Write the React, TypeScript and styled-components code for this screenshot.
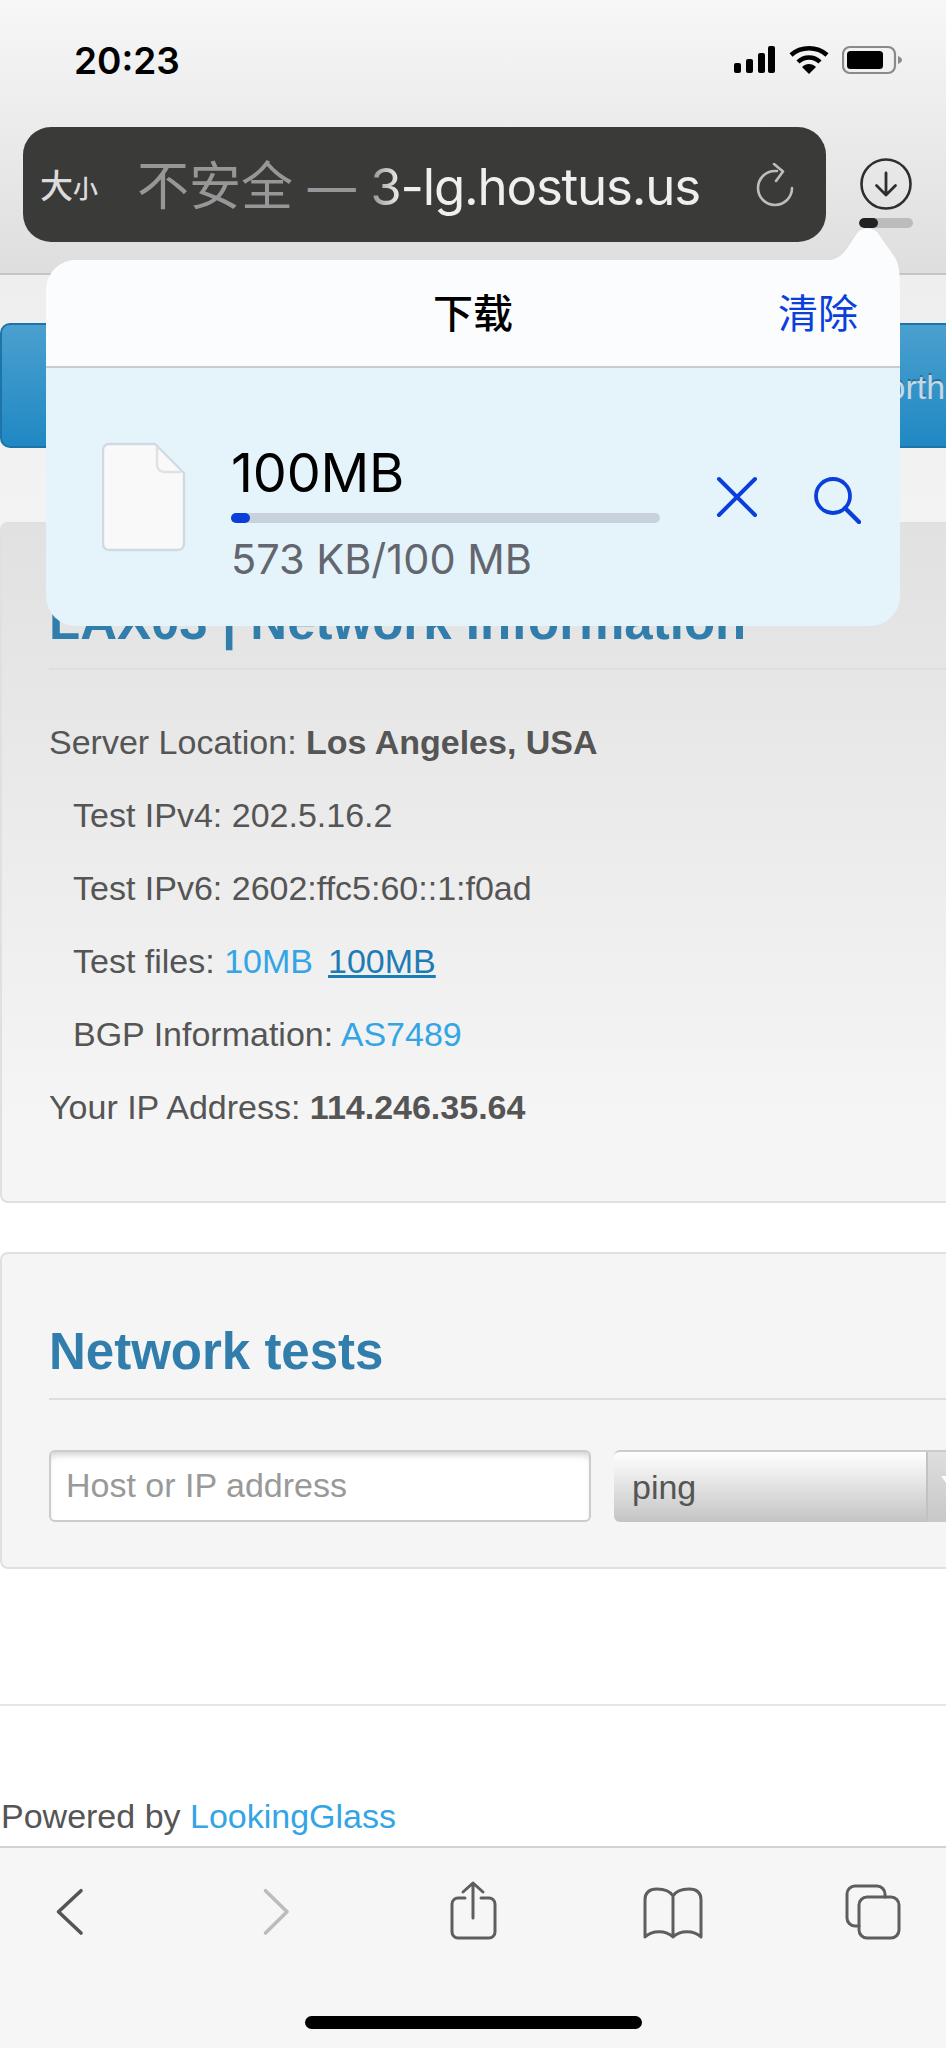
import React from "react";
import styled, { createGlobalStyle } from "styled-components";

const GlobalStyle = createGlobalStyle`
  html, body {
    margin: 0;
    padding: 0;
    background: #fff;
  }
  * {
    box-sizing: border-box;
  }
`;

const IOS_FONT = `Inter, "Noto Sans CJK SC", sans-serif`;
const WEB_FONT = `"Liberation Sans", Arial, sans-serif`;
const BLUE = "#0a3fdc";

const rows = [
  { id: "loc", indent: false, label: "Server Location: ", strong: "Los Angeles, USA" },
  { id: "v4", indent: true, label: "Test IPv4: 202.5.16.2" },
  { id: "v6", indent: true, label: "Test IPv6: 2602:ffc5:60::1:f0ad" },
  { id: "files", indent: true, label: "Test files: ", links: true },
  { id: "bgp", indent: true, label: "BGP Information: ", link: "AS7489" },
  { id: "ip", indent: false, label: "Your IP Address: ", strong: "114.246.35.64" },
];

export default function App() {
  return (
    <Screen>
      <GlobalStyle />
      <BrowserBar>
        <StatusRow>
          <Clock>20:23</Clock>
          <StatusIcons>
            <svg width="42" height="28" viewBox="0 0 42 28">
              <rect x="0" y="17" width="7" height="10" rx="2" fill="#000" />
              <rect x="12" y="13" width="7" height="14" rx="2" fill="#000" />
              <rect x="24" y="7" width="7" height="20" rx="2" fill="#000" />
              <rect x="34" y="0" width="7" height="27" rx="2" fill="#000" />
            </svg>
            <svg width="40" height="30" viewBox="0 0 40 30">
              <path d="M2 10 C12 1 28 1 38 10" fill="none" stroke="#000" strokeWidth="4.5" />
              <path d="M9 17 C15 11 25 11 31 17" fill="none" stroke="#000" strokeWidth="4.5" />
              <path d="M13 22 C17 18 23 18 27 22 L20 29 Z" fill="#000" />
            </svg>
            <svg width="60" height="30" viewBox="0 0 60 30">
              <rect x="1" y="2" width="52" height="26" rx="7" fill="none" stroke="#8a8a8a" strokeWidth="2.2" />
              <rect x="5" y="6" width="36" height="18" rx="3.5" fill="#000" />
              <path d="M56 11 C59 12 60 14 60 15 C60 16 59 18 56 19 Z" fill="#8a8a8a" />
            </svg>
          </StatusIcons>
        </StatusRow>
        <UrlRow>
          <UrlBar>
            <TextSize>
              大<small>小</small>
            </TextSize>
            <UrlText>
              <InsecureLabel>
                不安全 <Dash>—</Dash>{" "}
              </InsecureLabel>
              <FadeDigit>3</FadeDigit>-lg.hostus.us
            </UrlText>
            <ReloadIcon width="40" height="48" viewBox="0 0 40 48">
              <path
                d="M36 25 A17 17 0 1 1 19 8 L21 8"
                fill="none"
                stroke="#bdbdbd"
                strokeWidth="2.6"
                strokeLinecap="round"
              />
              <path
                d="M18 1 L27 8.5 L20 18"
                fill="none"
                stroke="#bdbdbd"
                strokeWidth="2.6"
                strokeLinecap="round"
                strokeLinejoin="round"
              />
            </ReloadIcon>
          </UrlBar>
          <DownloadColumn>
            <svg width="54" height="54" viewBox="0 0 54 54">
              <circle cx="27" cy="27" r="24.5" fill="none" stroke="#2e2e2e" strokeWidth="2.6" />
              <path
                d="M27 16 V38 M17.5 28.5 L27 38 L36.5 28.5"
                fill="none"
                stroke="#2e2e2e"
                strokeWidth="2.8"
                strokeLinecap="round"
                strokeLinejoin="round"
              />
            </svg>
            <DownloadTrack>
              <DownloadFill />
            </DownloadTrack>
          </DownloadColumn>
        </UrlRow>
      </BrowserBar>

      <Page>
        <NavBar>
          <NavText>North America</NavText>
        </NavBar>

        <Card $dim>
          <CardTitle>LAX03 | Network Information</CardTitle>
          <InfoList>
            {rows.map((row) => (
              <InfoRow key={row.id} $indent={row.indent}>
                <span>{row.label}</span>
                {row.strong && <strong>{row.strong}</strong>}
                {row.link && <WebLink>{row.link}</WebLink>}
                {row.links && (
                  <>
                    <WebLink>10MB</WebLink>
                    <ActiveLink>100MB</ActiveLink>
                  </>
                )}
              </InfoRow>
            ))}
          </InfoList>
        </Card>

        <SecondCard>
          <CardTitle>Network tests</CardTitle>
          <FormRow>
            <HostInput placeholder="Host or IP address" />
            <SelectBox>
              <SelectValue>ping</SelectValue>
              <SelectArrow>
                <ArrowTriangle />
              </SelectArrow>
            </SelectBox>
          </FormRow>
        </SecondCard>

        <FooterRule />
        <Footer>
          Powered by <WebLink>LookingGlass</WebLink>
        </Footer>
      </Page>

      <Toolbar>
        <ToolbarIcons>
          <svg width="80" height="70" viewBox="0 0 80 70">
            <path d="M51 14.7 L28.5 35.7 L51 57" fill="none" stroke="#555" strokeWidth="3.6" strokeLinecap="round" strokeLinejoin="round" />
          </svg>
          <svg width="80" height="70" viewBox="0 0 80 70">
            <path d="M35.5 14.7 L57 35.7 L35.5 57" fill="none" stroke="#bcbcbc" strokeWidth="3.6" strokeLinecap="round" strokeLinejoin="round" />
          </svg>
          <svg width="80" height="70" viewBox="0 0 80 70">
            <g fill="none" stroke="#5e5e5e" strokeWidth="3" strokeLinecap="round" strokeLinejoin="round">
              <path d="M35 22 H28 a6 6 0 0 0 -6 6 V56 a6 6 0 0 0 6 6 H59 a6 6 0 0 0 6 -6 V28 a6 6 0 0 0 -6 -6 H51" />
              <path d="M43 7 V42 M33 16 L43 7 L53 16" />
            </g>
          </svg>
          <svg width="80" height="70" viewBox="0 0 80 70">
            <g fill="none" stroke="#5e5e5e" strokeWidth="3" strokeLinecap="round" strokeLinejoin="round">
              <path d="M43 20 C40 15 34 13 27 13 C19 13 15 17 15 24 V61 C22 54 36 54 43 61 C50 54 64 54 71 61 V24 C71 17 67 13 59 13 C52 13 46 15 43 20 V61" />
            </g>
          </svg>
          <svg width="80" height="70" viewBox="0 0 80 70">
            <g fill="none" stroke="#5e5e5e" strokeWidth="3" strokeLinecap="round" strokeLinejoin="round">
              <path d="M55 21 V18 a8 8 0 0 0 -8 -8 H25 a8 8 0 0 0 -8 8 V42 a8 8 0 0 0 8 8 H29" />
              <rect x="29" y="21" width="40" height="41" rx="8" />
            </g>
          </svg>
        </ToolbarIcons>
        <HomeIndicator />
      </Toolbar>

      <Popover>
        <PopoverTail width="90" height="64" viewBox="0 0 90 64">
          <path d="M0 34 L20 34 C28 33 33 28 36 24 L48 6 C54 1 60 1 67 6 L84 30 C88 36 90 42 90 64 L0 64 Z" fill="#fbfcfe" />
        </PopoverTail>
        <PopoverHeader>
          <span />
          <PopoverTitle>下载</PopoverTitle>
          <ClearButton>清除</ClearButton>
        </PopoverHeader>
        <PopoverBody>
          <svg width="84" height="110" viewBox="0 0 84 110">
            <path
              d="M7 2 H53 L82 31 V102 a6 6 0 0 1 -6 6 H7 a6 6 0 0 1 -6 -6 V8 a6 6 0 0 1 6 -6 Z"
              fill="#f9f9f9"
              stroke="#cfdae2"
              strokeWidth="2.4"
              strokeLinejoin="round"
            />
            <path d="M55 5 V23 a7 7 0 0 0 7 7 H79" fill="none" stroke="#dfe2e4" strokeWidth="2.4" />
          </svg>
          <FileInfo>
            <FileName>100MB</FileName>
            <ProgressTrack>
              <ProgressFill />
            </ProgressTrack>
            <FileMeta>573 KB/100 MB</FileMeta>
          </FileInfo>
          <Actions>
            <svg width="42" height="42" viewBox="0 0 42 42">
              <path d="M3 3 L39 39 M39 3 L3 39" stroke={BLUE} strokeWidth="4" strokeLinecap="round" />
            </svg>
            <svg width="48" height="48" viewBox="0 0 48 48">
              <circle cx="20" cy="20" r="17" fill="none" stroke={BLUE} strokeWidth="3.8" />
              <path d="M32 32 L46 46" stroke={BLUE} strokeWidth="4.4" strokeLinecap="round" />
            </svg>
          </Actions>
        </PopoverBody>
      </Popover>
    </Screen>
  );
}

const Screen = styled.div`
  position: relative;
  width: 946px;
  height: 2048px;
  overflow: hidden;
  display: flex;
  flex-direction: column;
  background: #fff;
`;

const BrowserBar = styled.header`
  height: 275px;
  flex-shrink: 0;
  background: linear-gradient(#f7f7f7, #dedede);
  border-bottom: 2px solid #c4c4c4;
`;

const StatusRow = styled.div`
  height: 127px;
  display: flex;
  align-items: flex-start;
  justify-content: space-between;
  padding: 39px 44px 0 74px;
`;

const Clock = styled.div`
  font-family: ${IOS_FONT};
  font-size: 37px;
  line-height: 44px;
  font-weight: 600;
  color: #000;
`;

const StatusIcons = styled.div`
  display: flex;
  align-items: center;
  gap: 13px;
  margin-top: 6px;
`;

const UrlRow = styled.div`
  display: flex;
  padding-left: 23px;
`;

const UrlBar = styled.div`
  width: 803px;
  height: 115px;
  display: flex;
  align-items: center;
  padding: 0 30px 0 17px;
  background: #3a3a39;
  border-radius: 28px;
`;

const TextSize = styled.div`
  width: 97px;
  margin-top: -2px;
  font-family: ${IOS_FONT};
  font-size: 33px;
  font-weight: 500;
  color: #dcdcdc;
  small {
    font-size: 25px;
  }
`;

const UrlText = styled.div`
  flex: 1;
  margin-top: -5px;
  font-family: ${IOS_FONT};
  font-size: 51px;
  letter-spacing: -1.2px;
  color: #efefef;
  white-space: nowrap;
`;

const InsecureLabel = styled.span`
  font-size: 52px;
  letter-spacing: 0;
  color: #979797;
`;

const Dash = styled.span`
  font-size: 48px;
`;

const FadeDigit = styled.span`
  background: linear-gradient(90deg, #8f8f8f, #f2f2f2);
  -webkit-background-clip: text;
  background-clip: text;
  color: transparent;
`;

const ReloadIcon = styled.svg`
  margin-top: 5px;
`;

const DownloadColumn = styled.div`
  display: flex;
  flex-direction: column;
  align-items: center;
  width: 54px;
  margin: 30px 0 0 33px;
  gap: 7px;
`;

const DownloadTrack = styled.div`
  width: 54px;
  height: 10px;
  border-radius: 5px;
  background: #bcbcbc;
  overflow: hidden;
`;

const DownloadFill = styled.div`
  width: 19px;
  height: 100%;
  border-radius: 5px;
  background: #222;
`;

const Page = styled.main`
  flex: 1;
  display: flex;
  flex-direction: column;
  padding-top: 48px;
  background: linear-gradient(#eeeeee 0, #f3f3f3 250px, #fff 900px);
  font-family: ${WEB_FONT};
  font-size: 34px;
  color: #555;
`;

const NavBar = styled.nav`
  width: 960px;
  height: 125px;
  flex-shrink: 0;
  display: flex;
  align-items: center;
  padding: 4px 0 0 860px;
  border: 2px solid #1c74a8;
  border-radius: 10px;
  background: linear-gradient(#4aa0cf, #2088c3);
`;

const NavText = styled.span`
  color: #c6d8e4;
  white-space: nowrap;
  text-shadow: 0 -2px 0 rgba(0, 0, 0, 0.25);
`;

const Card = styled.section<{ $dim?: boolean }>`
  width: 960px;
  height: 681px;
  flex-shrink: 0;
  margin-top: 74px;
  padding: 70px 0 0 47px;
  border: 2px solid #e0e0e0;
  border-radius: 8px;
  background: ${(p) => (p.$dim ? "linear-gradient(#e1e1e1, #f5f5f5 88%)" : "#f5f5f5")};
`;

const SecondCard = styled(Card)`
  height: 317px;
  margin-top: 49px;
`;

const CardTitle = styled.h3`
  margin: 0;
  padding-bottom: 18px;
  border-bottom: 2px solid #dedede;
  font-size: 51px;
  line-height: 56px;
  font-weight: 700;
  color: #317eac;
`;

const InfoList = styled.div`
  display: flex;
  flex-direction: column;
  padding-top: 36px;
`;

const InfoRow = styled.div<{ $indent?: boolean }>`
  height: 73.1px;
  line-height: 73px;
  padding-left: ${(p) => (p.$indent ? "24px" : "0")};
  white-space: pre;
`;

const WebLink = styled.a`
  color: #33a5e5;
`;

const ActiveLink = styled.a`
  margin-left: 15px;
  color: #1d7bb5;
  text-decoration: underline;
`;

const FormRow = styled.div`
  display: flex;
  gap: 23px;
  padding-top: 50px;
`;

const HostInput = styled.input`
  width: 542px;
  height: 72px;
  padding: 0 15px 1px;
  border: 2px solid #ccc;
  border-radius: 6px;
  box-shadow: inset 0 6px 6px -3px rgba(0, 0, 0, 0.18);
  background: #fff;
  font-family: ${WEB_FONT};
  font-size: 34px;
  &::placeholder {
    color: #999;
    opacity: 1;
  }
`;

const SelectBox = styled.div`
  width: 340px;
  height: 72px;
  display: flex;
  align-items: center;
  border-top: 2px solid #ccc;
  border-radius: 6px;
  background: linear-gradient(#fff, #c4c4c4);
`;

const SelectValue = styled.div`
  width: 312px;
  flex-shrink: 0;
  padding-left: 18px;
  font-size: 34px;
  color: #555;
`;

const SelectArrow = styled.div`
  flex: 1;
  height: 100%;
  padding: 24px 0 0 13px;
  border-left: 2px solid #c2c2c2;
  background: linear-gradient(#dedede, #c8c8c8);
`;

const ArrowTriangle = styled.div`
  width: 0;
  height: 0;
  border-left: 11px solid transparent;
  border-right: 11px solid transparent;
  border-top: 15px solid #fff;
`;

const FooterRule = styled.hr`
  width: 100%;
  margin: 135px 0 0;
  border: 0;
  border-top: 2px solid #e6e6e6;
`;

const Footer = styled.footer`
  margin-top: 88px;
  padding-left: 1px;
  line-height: 44px;
  white-space: pre;
`;

const Toolbar = styled.div`
  height: 202px;
  flex-shrink: 0;
  display: flex;
  flex-direction: column;
  padding-top: 28px;
  background: #f6f6f6;
  border-top: 2px solid #d3d3d3;
`;

const ToolbarIcons = styled.div`
  display: flex;
  gap: 120px;
  padding-left: 30px;
`;

const HomeIndicator = styled.div`
  width: 337px;
  height: 13px;
  margin: 70px 0 0 305px;
  border-radius: 7px;
  background: #000;
`;

const Popover = styled.div`
  position: absolute;
  left: 46px;
  top: 260px;
  width: 854px;
  height: 366px;
  display: flex;
  flex-direction: column;
  border-radius: 30px;
  background: #e5f3fb;
  font-family: ${IOS_FONT};
`;

const PopoverTail = styled.svg`
  position: absolute;
  right: 0;
  top: -34px;
`;

const PopoverHeader = styled.div`
  position: relative;
  height: 108px;
  display: grid;
  grid-template-columns: 1fr auto 1fr;
  align-items: center;
  padding: 0 42px 5px;
  border-radius: 30px 30px 0 0;
  border-bottom: 2px solid #c6ced4;
  background: #fbfcfe;
`;

const PopoverTitle = styled.div`
  font-size: 40px;
  font-weight: 500;
  color: #000;
`;

const ClearButton = styled.div`
  justify-self: end;
  font-size: 40px;
  color: ${BLUE};
`;

const PopoverBody = styled.div`
  flex: 1;
  display: flex;
  align-items: flex-start;
  padding: 74px 0 0 56px;
  border-radius: 0 0 30px 30px;
`;

const FileInfo = styled.div`
  width: 429px;
  margin-left: 45px;
  display: flex;
  flex-direction: column;
`;

const FileName = styled.div`
  font-size: 54px;
  line-height: 62px;
  letter-spacing: -0.2px;
  color: #000;
`;

const ProgressTrack = styled.div`
  height: 10px;
  margin-top: 9px;
  border-radius: 5px;
  background: #c8d2dc;
`;

const ProgressFill = styled.div`
  width: 19px;
  height: 100%;
  border-radius: 5px;
  background: ${BLUE};
`;

const FileMeta = styled.div`
  margin-top: 11px;
  font-size: 41.5px;
  line-height: 50px;
  color: #63666e;
`;

const Actions = styled.div`
  display: flex;
  align-items: flex-start;
  gap: 55px;
  margin: 34px 0 0 56px;
`;
